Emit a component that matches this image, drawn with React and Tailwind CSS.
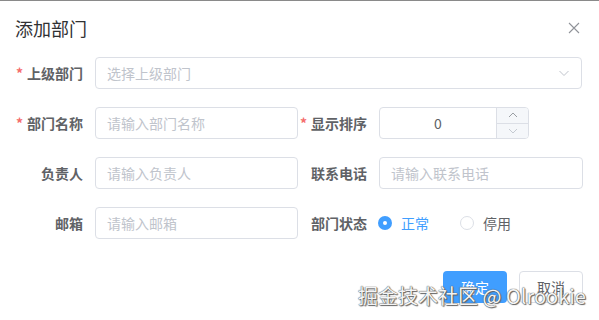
import React from 'react';

const font = { fontFamily: '"Noto Sans CJK SC", "Liberation Sans", sans-serif' };

const Label = ({ text, required }) => (
  <label className="flex h-8 w-20 shrink-0 items-center justify-end pr-3 text-sm font-bold text-[#606266]">
    {required && <span className="mr-1 text-[#f56c6c]">*</span>}
    {text}
  </label>
);

const Input = ({ placeholder, className = '' }) => (
  <div
    className={`flex h-8 items-center rounded border border-[#dcdfe6] bg-white px-[11px] text-sm text-[#c0c4cc] ${className}`}
  >
    {placeholder}
  </div>
);

const Radio = ({ label, checked }) => (
  <div className="flex items-center">
    {checked ? (
      <span className="flex h-[14px] w-[14px] items-center justify-center rounded-full bg-[#409eff]">
        <span className="h-1 w-1 rounded-full bg-white" />
      </span>
    ) : (
      <span className="h-[14px] w-[14px] rounded-full border border-[#dcdfe6] bg-white" />
    )}
    <span className={`ml-[9px] text-sm ${checked ? 'text-[#409eff]' : 'text-[#606266]'}`}>{label}</span>
  </div>
);

export default function App() {
  return (
    <div className="relative h-[320px] w-[599px] overflow-hidden border-t border-[#8a8a8a] bg-white" style={font}>
      <div className="flex items-center justify-between pl-[15px] pr-[19px] pt-[15px]">
        <h2 className="text-lg leading-6 text-[#303133]">添加部门</h2>
        <svg width="12" height="12" viewBox="0 0 12 12" className="text-[#909399]">
          <path d="M1 1L11 11M11 1L1 11" stroke="currentColor" strokeWidth="1.1" />
        </svg>
      </div>

      <div className="mt-[17px] flex flex-col gap-[18px] pl-[15px]">
        <div className="flex">
          <Label text="上级部门" required />
          <div className="flex h-8 w-[487px] items-center justify-between rounded border border-[#dcdfe6] px-[11px] text-sm text-[#c0c4cc]">
            <span>选择上级部门</span>
            <svg width="12" height="12" viewBox="0 0 12 12">
              <path d="M1.5 4L6 8.5L10.5 4" fill="none" stroke="#c0c4cc" strokeWidth="1" />
            </svg>
          </div>
        </div>

        <div className="flex">
          <div className="flex w-[284px]">
            <Label text="部门名称" required />
            <Input placeholder="请输入部门名称" className="w-[203px]" />
          </div>
          <div className="flex">
            <Label text="显示排序" required />
            <div className="flex h-8 w-[150px] overflow-hidden rounded border border-[#dcdfe6]">
              <div className="flex flex-1 items-center justify-center text-sm text-[#606266]">0</div>
              <div className="flex w-8 flex-col border-l border-[#dcdfe6] bg-[#f5f7fa]">
                <div className="flex flex-1 items-center justify-center border-b border-[#dcdfe6]">
                  <svg width="10" height="6" viewBox="0 0 10 6">
                    <path d="M1 5L5 1L9 5" fill="none" stroke="#909399" strokeWidth="0.9" />
                  </svg>
                </div>
                <div className="flex flex-1 items-center justify-center">
                  <svg width="10" height="6" viewBox="0 0 10 6">
                    <path d="M1 1L5 5L9 1" fill="none" stroke="#c0c4cc" strokeWidth="0.9" />
                  </svg>
                </div>
              </div>
            </div>
          </div>
        </div>

        <div className="flex">
          <div className="flex w-[284px]">
            <Label text="负责人" />
            <Input placeholder="请输入负责人" className="w-[203px]" />
          </div>
          <div className="flex">
            <Label text="联系电话" />
            <Input placeholder="请输入联系电话" className="w-[204px]" />
          </div>
        </div>

        <div className="flex">
          <div className="flex w-[284px]">
            <Label text="邮箱" />
            <Input placeholder="请输入邮箱" className="w-[203px]" />
          </div>
          <div className="flex items-center">
            <Label text="部门状态" />
            <div className="ml-[-1px] flex items-center gap-[31px]">
              <Radio label="正常" checked />
              <Radio label="停用" />
            </div>
          </div>
        </div>
      </div>

      <div className="mt-[32px] flex justify-end gap-3 pr-4">
        <button className="h-8 w-16 rounded bg-[#409eff] text-sm text-white">确定</button>
        <button className="h-8 w-16 rounded border border-[#dcdfe6] bg-white text-sm text-[#606266]">取消</button>
      </div>

      <div
        className="absolute left-[358px] top-[283px] whitespace-nowrap text-[20px] leading-6 text-[#f4f4f4]"
        style={{ textShadow: '0 0 1px #555, 0 0 1px #555, 1px 1px 1px #666' }}
      >
        掘金技术社区 @ Olrookie
      </div>
    </div>
  );
}
